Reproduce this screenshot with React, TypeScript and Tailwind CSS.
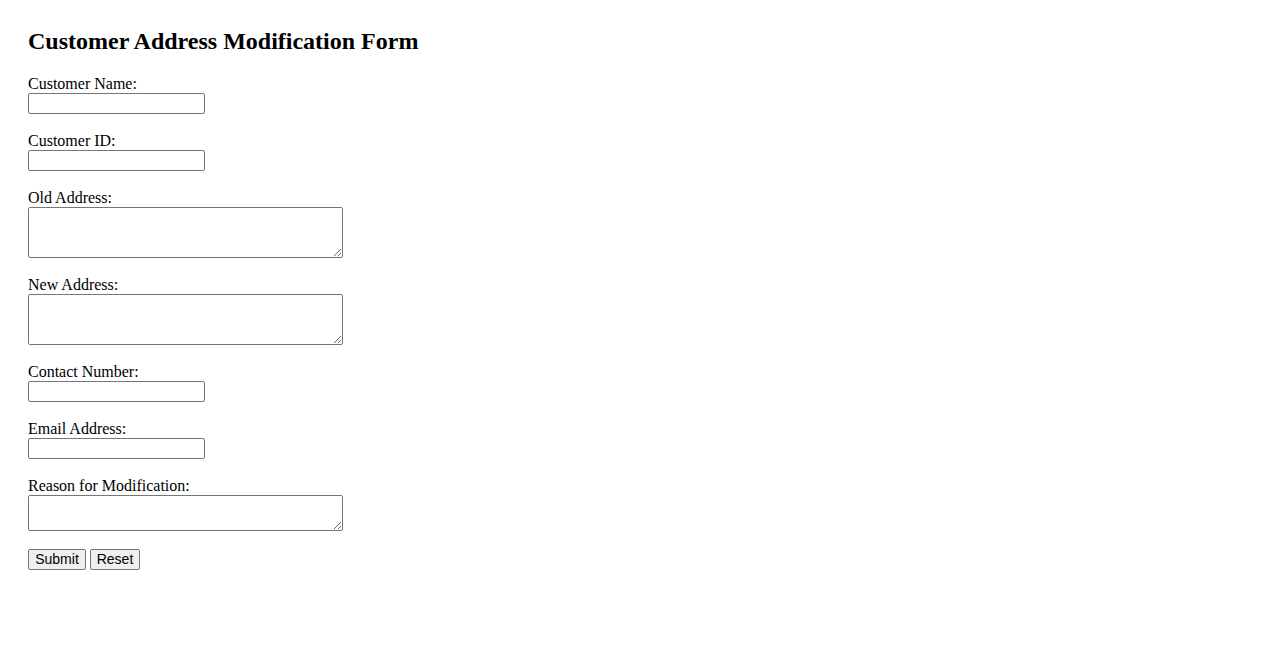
const fields = [
  { label: 'Customer Name:', kind: 'input' },
  { label: 'Customer ID:', kind: 'input' },
  { label: 'Old Address:', kind: 'area' },
  { label: 'New Address:', kind: 'area' },
  { label: 'Contact Number:', kind: 'input' },
  { label: 'Email Address:', kind: 'input' },
  { label: 'Reason for Modification:', kind: 'small' },
]

export default function App() {
  return (
    <div className="min-h-screen bg-white px-[28px] pt-[28px] font-['Liberation_Serif','Times_New_Roman',serif] text-black">
      <h2 className="mb-[20px] text-[24px] font-bold leading-[27px]">Customer Address Modification Form</h2>

      <form onSubmit={(e) => e.preventDefault()}>
        {fields.map((f) => (
          <div key={f.label} className="mb-[18px]">
            <label className="block text-[16px] leading-[18px]">{f.label}</label>
            {f.kind === 'input' ? (
              <input
                type="text"
                className="block h-[21px] w-[177px] rounded-[2px] border border-[#767676] bg-white px-[2px] font-['Liberation_Sans',Arial,sans-serif] text-[13.33px]"
              />
            ) : (
              <textarea
                className={`block w-[315px] rounded-[2px] border border-[#767676] bg-white px-[2px] py-[2px] font-['Liberation_Mono',monospace] text-[13.33px] ${
                  f.kind === 'area' ? 'h-[51px]' : 'h-[36px]'
                }`}
              />
            )}
          </div>
        ))}

        <div className="flex gap-[4px] font-['Liberation_Sans',Arial,sans-serif] text-[14px]">
          <button type="submit" className="h-[21px] w-[58px] rounded-[2px] border border-[#767676] bg-[#efefef] text-center leading-[17px]">
            Submit
          </button>
          <button type="reset" className="h-[21px] w-[50px] rounded-[2px] border border-[#767676] bg-[#efefef] text-center leading-[17px]">
            Reset
          </button>
        </div>
      </form>
    </div>
  )
}
